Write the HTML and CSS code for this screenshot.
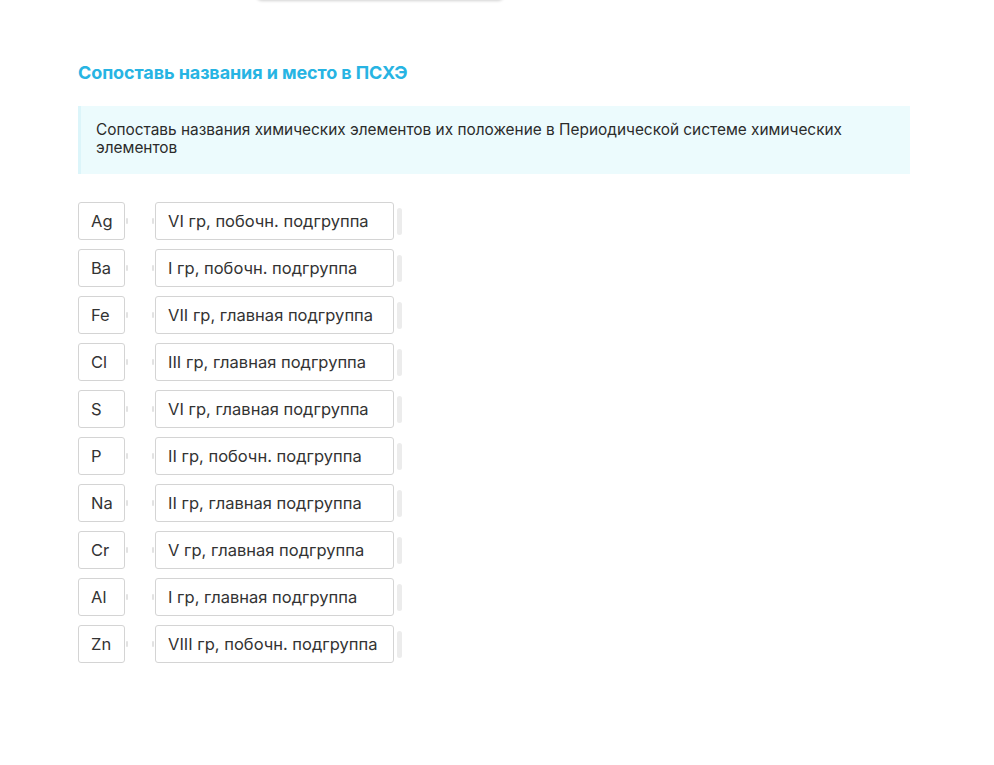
FILE: index.html
```html
<!DOCTYPE html>
<html lang="ru">
<head>
    <meta charset="UTF-8">
    <title>Сопоставь названия и место в ПСХЭ</title>
    <link rel="stylesheet" href="styles.css">
</head>
<body>
    <div class="top-card"></div>

    <div class="task">
        <h2 class="task-title">Сопоставь названия и место в ПСХЭ</h2>

        <div class="task-hint">
            Сопоставь названия химических элементов их положение в Периодической системе химических элементов
        </div>

        <div class="pairs">
            <div class="pair">
                <div class="item item-left">Ag</div>
                <div class="item item-right">VI гр, побочн. подгруппа</div>
                <div class="handle"></div>
            </div>
            <div class="pair">
                <div class="item item-left">Ba</div>
                <div class="item item-right">I гр, побочн. подгруппа</div>
                <div class="handle"></div>
            </div>
            <div class="pair">
                <div class="item item-left">Fe</div>
                <div class="item item-right">VII гр, главная подгруппа</div>
                <div class="handle"></div>
            </div>
            <div class="pair">
                <div class="item item-left">Cl</div>
                <div class="item item-right">III гр, главная подгруппа</div>
                <div class="handle"></div>
            </div>
            <div class="pair">
                <div class="item item-left">S</div>
                <div class="item item-right">VI гр, главная подгруппа</div>
                <div class="handle"></div>
            </div>
            <div class="pair">
                <div class="item item-left">P</div>
                <div class="item item-right">II гр, побочн. подгруппа</div>
                <div class="handle"></div>
            </div>
            <div class="pair">
                <div class="item item-left">Na</div>
                <div class="item item-right">II гр, главная подгруппа</div>
                <div class="handle"></div>
            </div>
            <div class="pair">
                <div class="item item-left">Cr</div>
                <div class="item item-right">V гр, главная подгруппа</div>
                <div class="handle"></div>
            </div>
            <div class="pair">
                <div class="item item-left">Al</div>
                <div class="item item-right">I гр, главная подгруппа</div>
                <div class="handle"></div>
            </div>
            <div class="pair">
                <div class="item item-left">Zn</div>
                <div class="item item-right">VIII гр, побочн. подгруппа</div>
                <div class="handle"></div>
            </div>
        </div>
    </div>
</body>
</html>
```

FILE: styles.css
```css
body {
    margin: 0;
    font-family: Inter, 'Noto Sans', sans-serif;
    color: #333;
    background: #fff;
}

.top-card {
    width: 248px;
    height: 6px;
    margin: -6px 0 0 256px;
    background: #fff;
    border-radius: 0 0 8px 8px;
    box-shadow: 0 1px 3px rgba(0, 0, 0, 0.18);
}

.task {
    width: 832px;
    margin: 0 0 0 78px;
    padding-top: 61px;
}

.task-title {
    margin: 0 0 21px 0;
    font-size: 18px;
    font-weight: 700;
    line-height: 24px;
    color: #27b4e3;
    letter-spacing: -0.1px;
}

.task-hint {
    background: #ecfbfd;
    border-left: 3px solid #dcf5fa;
    padding: 15px 60px 17px 15px;
    font-size: 15.4px;
    line-height: 18px;
    color: #2b2b2b;
}

.pairs {
    margin-top: 28px;
    display: flex;
    flex-direction: column;
    gap: 9px;
}

.pair {
    display: flex;
    align-items: center;
}

.item {
    position: relative;
    box-sizing: border-box;
    height: 38px;
    border: 1px solid #d4d4d4;
    border-radius: 3px;
    background: #fff;
    font-size: 16.5px;
    line-height: 36px;
    color: #333;
    white-space: nowrap;
}

.item-left {
    width: 47px;
    padding-left: 12px;
}

.item-right {
    width: 239px;
    margin-left: 30px;
    padding-left: 12px;
}

.item-left::after,
.item-right::before {
    content: "";
    position: absolute;
    top: 15px;
    width: 2px;
    height: 6px;
    background: #e2e2e2;
    border-radius: 1px;
}

.item-left::after {
    right: -4px;
}

.item-right::before {
    left: -4px;
}

.handle {
    width: 5px;
    height: 27px;
    margin-left: 3px;
    background: #ececec;
    border-radius: 3px;
}
```
